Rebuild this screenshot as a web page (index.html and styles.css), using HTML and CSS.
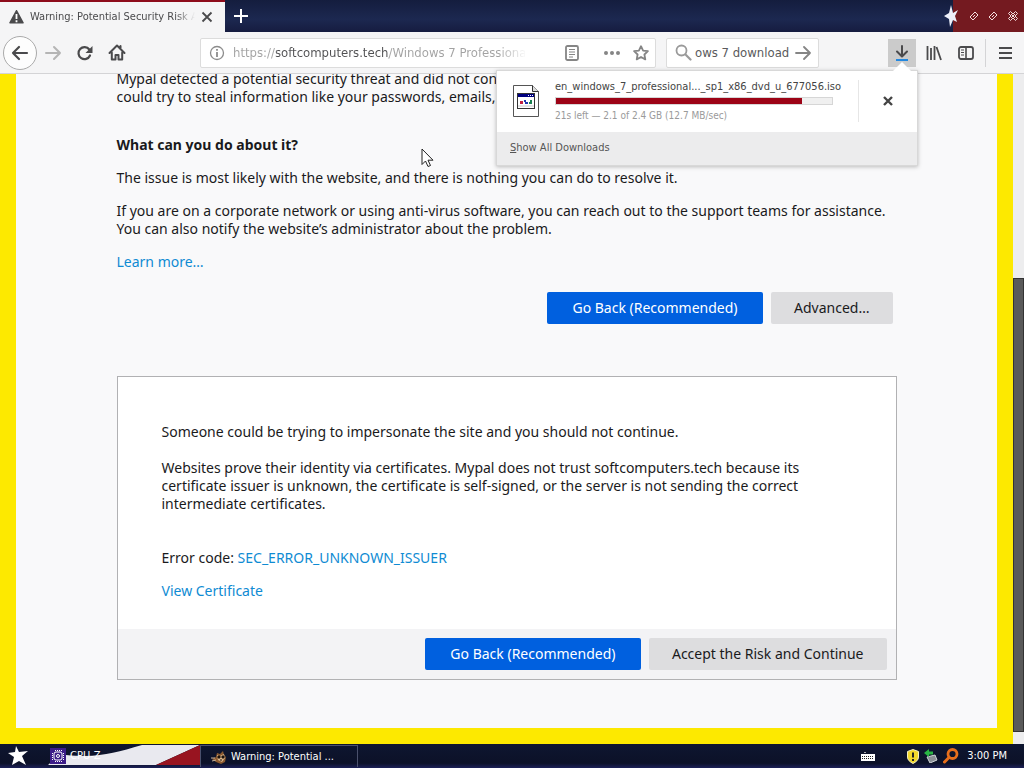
FILE: index.html
```html
<!DOCTYPE html>
<html lang="en">
<head>
  <meta charset="UTF-8" />
  <meta name="viewport" content="width=device-width, initial-scale=1.0"/>
  <title>Warning: Potential Security Risk Ahead</title>
  <link rel="stylesheet" href="styles.css">
</head>
<body>

  <!-- Tabs and window buttons -->
  <div class="titlebar">
    <div class="tab">
      <svg class="tab-icon" width="15" height="14" viewBox="0 0 15 14"><path d="M7.500.8 14 12.800H1z" fill="#4a4a4c" stroke="#4a4a4c" stroke-width="1.600" stroke-linejoin="round"/><path d="M7.500 4v5M7.500 10.300v2" stroke="#fff" stroke-width="1.800"/></svg>
      <span class="tab-title">Warning: Potential Security Risk Ahead</span>
      <button class="tab-close" aria-label="Close tab">
        <svg width="12" height="12" viewBox="0 0 12 12"><path d="M1.500 1.500l9 9M10.500 1.500l-9 9" stroke="#4a4a4c" stroke-width="1.800"/></svg>
      </button>
    </div>
    <button class="new-tab" aria-label="New tab">
      <svg width="14" height="14" viewBox="0 0 14 14"><path d="M7 0v14M0 7h14" stroke="#fff" stroke-width="2"/></svg>
    </button>
    <div class="window-buttons">
      <svg class="window-star" width="15" height="24" viewBox="0 0 15 24"><path d="M7 1l2 8 5-3-3 6 2 6-4-2-3 7-1-8-5-3 5-3z" fill="#eef0fa"/></svg>
      <button aria-label="Minimize"><svg width="10" height="10" viewBox="0 0 10 10"><path d="M1 6l5-5 3 3-5 5zM4 6l2-2" fill="none" stroke="#f3dede"/></svg></button>
      <button aria-label="Restore"><svg width="10" height="10" viewBox="0 0 10 10"><path d="M1 6l5-5 3 3-5 5zM4 6l2-2" fill="none" stroke="#f3dede"/></svg></button>
      <button aria-label="Close"><svg width="10" height="10" viewBox="0 0 10 10"><path d="M.5 2.500l2-2L5 3 7.500.500l2 2L7 5l2.500 2.500-2 2L5 7 2.500 9.500l-2-2L3 5zM3 3l4 4M7 3L3 7" fill="none" stroke="#f3dede"/></svg></button>
    </div>
  </div>

  <!-- Navigation toolbar -->
  <div class="toolbar">
    <div class="nav-buttons">
      <button class="back" aria-label="Back"><svg width="18" height="16" viewBox="0 0 18 16"><path d="M16 8H2M8 2L2 8l6 6" fill="none" stroke="#4a4a4c" stroke-width="2.200" stroke-linecap="round" stroke-linejoin="round"/></svg></button>
      <button aria-label="Forward"><svg width="18" height="16" viewBox="0 0 18 16"><path d="M2 8h14M10 2l6 6-6 6" fill="none" stroke="#b5b5b5" stroke-width="2" stroke-linecap="round" stroke-linejoin="round"/></svg></button>
      <button aria-label="Reload"><svg width="16" height="16" viewBox="0 0 16 16"><path d="M13 10.500A6 6 0 1 1 12.300 4.500" fill="none" stroke="#4a4a4c" stroke-width="2.200" stroke-linecap="round"/><path d="M15.500 1v7h-7z" fill="#4a4a4c"/></svg></button>
      <button aria-label="Home"><svg width="18" height="17" viewBox="0 0 18 17"><path d="M1.500 9L9 1.500 16.500 9M12.500 2v3M3.800 8.500V15.500h3.700V11h3v4.500h3.700V8.500" fill="none" stroke="#4a4a4c" stroke-width="2" stroke-linejoin="round" stroke-linecap="round"/></svg></button>
    </div>

    <div class="field url">
      <svg width="16" height="16" viewBox="0 0 16 16"><circle cx="8" cy="8" r="6.500" fill="none" stroke="#8c8c8c" stroke-width="1.300"/><path d="M8 7v5M8 4v1.800" stroke="#8c8c8c" stroke-width="1.800"/></svg>
      <input type="text" class="url-input" aria-label="Address" value="https://softcomputers.tech/Windows 7 Professional SP1">
      <button class="reader" aria-label="Reader view"><svg width="14" height="16" viewBox="0 0 14 16"><rect x="1" y="1" width="12" height="14" rx="1.500" fill="none" stroke="#858585" stroke-width="1.800"/><path d="M4 4.500h6M4 7h6M4 9.500h6M4 12h4" stroke="#858585" stroke-width="1.200"/></svg></button>
      <button class="more" aria-label="Page actions"><svg width="18" height="6" viewBox="0 0 18 6"><circle cx="3" cy="3" r="2" fill="#858585"/><circle cx="9" cy="3" r="2" fill="#858585"/><circle cx="15" cy="3" r="2" fill="#858585"/></svg></button>
      <button aria-label="Bookmark"><svg width="16" height="16" viewBox="0 0 16 16"><path d="M8 1.200l2.100 4.400 4.800.6-3.500 3.300.9 4.900L8 12l-4.300 2.400.9-4.900L1.100 6.200l4.800-.6z" fill="none" stroke="#858585" stroke-width="1.800" stroke-linejoin="round"/></svg></button>
    </div>

    <div class="field search">
      <svg width="17" height="17" viewBox="0 0 17 17"><circle cx="6.500" cy="6.500" r="5" fill="none" stroke="#9a9a9a" stroke-width="1.800"/><path d="M10.500 10.500l5 5" stroke="#9a9a9a" stroke-width="2.200" stroke-linecap="round"/></svg>
      <input type="text" class="search-input" aria-label="Search" value="ows 7 download">
      <button aria-label="Go"><svg width="17" height="14" viewBox="0 0 17 14"><path d="M1 7h14M9 1l6 6-6 6" fill="none" stroke="#858585" stroke-width="1.800" stroke-linecap="round" stroke-linejoin="round"/></svg></button>
    </div>

    <div class="tools">
      <div class="downloads">
        <button class="downloads-button" aria-label="Downloads"><svg width="16" height="18" viewBox="0 0 16 18"><path d="M8 2v10M3 7.500L8 12.500l5-5" fill="none" stroke="#4a4a4c" stroke-width="2" stroke-linecap="round" stroke-linejoin="round"/><path d="M2 16h12" stroke="#2388e0" stroke-width="2"/></svg></button>
        <div class="panel">
          <div class="download">
            <svg class="file-icon" width="26" height="32" viewBox="0 0 26 32"><path d="M.5.500h19l6 6v25H.5z" fill="#fff" stroke="#555"/><path d="M19.500.500v6h6" fill="#ddd" stroke="#333"/><rect x="4.500" y="8.500" width="17" height="15" fill="#fff" stroke="#333"/><path d="M5 9h16v3H5z" fill="#000080"/><path d="M15 10.500h1M17 10.500h1M19 10.500h1" stroke="#fff"/><path d="M7 16h3v3H7z" fill="#c22040"/><path d="M11 15h2v2h2v2h-3v-2h-1z" fill="#2038b0"/><path d="M17 15h2v4h-3v-2h1z" fill="#188050"/><path d="M5 21h16" stroke="#c8c8c8"/></svg>
            <div class="download-info">
              <div class="file-name">en_windows_7_professional..._sp1_x86_dvd_u_677056.iso</div>
              <div class="progress"><div class="progress-fill" style="width: 89.3%"></div></div>
              <div class="file-status">21s left — 2.1 of 2.4 GB (12.7 MB/sec)</div>
            </div>
            <button class="cancel" aria-label="Cancel download"><svg width="10" height="10" viewBox="0 0 10 10"><path d="M1 1l8 8M9 1L1 9" stroke="#444" stroke-width="2.400"/></svg></button>
          </div>
          <button class="show-all"><u>S</u>how All Downloads</button>
        </div>
      </div>
      <button aria-label="Library"><svg width="16" height="16" viewBox="0 0 16 16"><path d="M1.500 1v14M5 3v12M8.500 1v14M10.500 2l4.500 13" fill="none" stroke="#4a4a4c" stroke-width="1.800"/></svg></button>
      <button aria-label="Sidebar"><svg width="16" height="14" viewBox="0 0 16 14"><rect x="1" y="1" width="14" height="12" rx="2" fill="none" stroke="#4a4a4c" stroke-width="1.800"/><path d="M8 1v12" stroke="#4a4a4c" stroke-width="1.600"/><path d="M3 4h3M3 6.500h3M3 9h3" stroke="#4a4a4c"/></svg></button>
      <button class="menu" aria-label="Menu"><svg width="13" height="12" viewBox="0 0 13 12"><path d="M0 1h13M0 6h13M0 11h13" stroke="#4a4a4c" stroke-width="2"/></svg></button>
    </div>
  </div>

  <!-- Page -->
  <div class="viewport">
    <main class="page">
      <div class="container">
        <p>Mypal detected a potential security threat and did not continue to softcomputers.tech. If you visit this site, attackers could try to steal information like your passwords, emails, or credit card details.</p>
        <h2>What can you do about it?</h2>
        <p>The issue is most likely with the website, and there is nothing you can do to resolve it.</p>
        <p>If you are on a corporate network or using anti-virus software, you can reach out to the support teams for assistance. You can also notify the website’s administrator about the problem.</p>
        <p><a href="#">Learn more…</a></p>
        <div class="buttons">
          <button class="button primary">Go Back (Recommended)</button>
          <button class="button">Advanced…</button>
        </div>

        <section class="advanced">
          <div class="advanced-text">
            <p>Someone could be trying to impersonate the site and you should not continue.</p>
            <p class="explain">Websites prove their identity via certificates. Mypal does not trust softcomputers.tech because its certificate issuer is unknown, the certificate is self-signed, or the server is not sending the correct intermediate certificates.</p>
            <p>Error code: <a href="#">SEC_ERROR_UNKNOWN_ISSUER</a></p>
            <p><a href="#">View Certificate</a></p>
          </div>
          <div class="advanced-buttons">
            <button class="button primary">Go Back (Recommended)</button>
            <button class="button">Accept the Risk and Continue</button>
          </div>
        </section>
      </div>
    </main>
    <div class="scrollbar"><div class="thumb"></div></div>
  </div>

  <!-- Taskbar -->
  <div class="taskbar">
    <button class="start" aria-label="Start"><svg width="22" height="22" viewBox="0 0 22 22"><path d="M9 1l3 6 9-1-6 5 4 9-7-4-7 4 2-8-6-4 7-1z" fill="#fff"/></svg></button>
    <button class="task cpu">
      <svg class="flag" width="152" height="20" viewBox="0 0 152 20" preserveAspectRatio="none"><path d="M0 20C6 14 10 12 18 10c34 3 48-2 76-10h58L108 20z" fill="#e9e9ef"/><path d="M152 0v20h-44z" fill="#981420"/></svg>
      <svg class="chip" width="16" height="16" viewBox="0 0 16 16"><rect width="16" height="16" fill="#3c1c88"/><rect x="4" y="4" width="8" height="8" rx="2" fill="none" stroke="#fff"/><circle cx="8" cy="8" r="1.500" fill="none" stroke="#fff"/><path d="M5 2.500h7M5 13.500h7M2.500 5v7M13.500 5v7" stroke="#fff" stroke-dasharray="1 1"/></svg>
      <span class="task-label">CPU-Z</span>
    </button>
    <button class="task active">
      <svg width="16" height="14" viewBox="0 0 16 14"><path d="M1 9l4-2 1-4 3 1 3-3 1 4 2 2-1 5-4 2-5-2z" fill="#8b5a30"/><path d="M6 5l3 1 4-2 1 4-3 4-4-2z" fill="#dcb68a"/><path d="M7 6h2v2H7zM11 6h2v2h-2zM9 10h2" fill="#1c120c" stroke="#1c120c"/><path d="M0 8h4M1 11l4-1" stroke="#c9b39a"/></svg>
      <span class="task-label">Warning: Potential ...</span>
    </button>
    <div class="tray">
      <svg class="keyboard" width="14" height="9" viewBox="0 0 14 9"><path d="M0 2h14v7H0z" fill="#fff"/><path d="M3 0h2v1H3z" fill="#aaa"/><path d="M1 4.500h12M1 6.500h12" stroke="#222" stroke-dasharray="1 1"/></svg>
      <svg width="12" height="15" viewBox="0 0 12 15"><path d="M6 .5l5.500 2V8c0 3-2.500 5-5.500 6.500C3 13 .5 11 .5 8V2.500z" fill="#f2d72a" stroke="#f5f0c0"/><path d="M6 3.500v5M6 10v2" stroke="#222" stroke-width="2"/></svg>
      <svg width="14" height="14" viewBox="0 0 14 14"><path d="M3 8l8-2 2 5-7 3z" fill="#8b9096" stroke="#d0d4d8"/><path d="M0 4l5-4v2.500h4v3H5V8z" fill="#29b544"/></svg>
      <svg width="16" height="16" viewBox="0 0 16 16"><circle cx="9.500" cy="6" r="4.500" fill="none" stroke="#e86f1c" stroke-width="2.800"/><path d="M6 9.500L1.500 14" stroke="#e86f1c" stroke-width="3" stroke-linecap="round"/></svg>
      <span class="clock">3:00 PM</span>
    </div>
  </div>

  <svg class="cursor" width="13" height="20" viewBox="0 0 13 20"><path d="M1 1v15.500l3.500-3.500L7 18.500l2.500-1L7 12.200h5z" fill="#fff" stroke="#222"/></svg>

</body>
</html>
```
FILE: styles.css
```css
* {
  box-sizing: border-box;
}

body {
  margin: 0;
  height: 100vh;
  display: flex;
  flex-direction: column;
  overflow: hidden;
  background: #f9f9fa;
  color: #1a1a1c;
  font-family: "DejaVu Sans Condensed", "Noto Sans", sans-serif;
  font-size: 14px;
  line-height: 18px;
}

button,
input {
  margin: 0;
  padding: 0;
  border: none;
  background: none;
  color: inherit;
  font: inherit;
}

button {
  display: flex;
  align-items: center;
  justify-content: center;
}

svg {
  display: block;
  flex-shrink: 0;
}

/* title bar */
.titlebar {
  height: 32px;
  display: flex;
  flex-shrink: 0;
  background: linear-gradient(#141d3e, #1c2850 60%, #161c40);
}

.tab {
  width: 225px;
  display: flex;
  align-items: center;
  padding: 0 12px 0 9px;
  border-top: 2px solid #8e0c1c;
  background: #f5f5f6;
  color: #4a4a4c;
  font-size: 11px;
}

.tab-title {
  flex: 1;
  margin: 0 6px;
  overflow: hidden;
  white-space: nowrap;
  -webkit-mask-image: linear-gradient(to right, #000 88%, transparent);
  mask-image: linear-gradient(to right, #000 88%, transparent);
}

.new-tab {
  width: 32px;
}

.window-buttons {
  width: 80px;
  margin-left: auto;
  display: flex;
  align-items: center;
  justify-content: space-between;
  padding-right: 6px;
  background: linear-gradient(to right, transparent 9px, #741a20 9px);
}

/* toolbar */
.toolbar {
  height: 42px;
  display: flex;
  flex-shrink: 0;
  align-items: center;
  border-bottom: 1px solid #d4d4d6;
  background: #f5f5f6;
}

.nav-buttons {
  width: 200px;
  display: flex;
  padding-left: 3px;
}

.nav-buttons button {
  width: 32px;
}

.nav-buttons .back {
  width: 34px;
  height: 34px;
  border: 1px solid #aaa;
  border-radius: 50%;
  background: #fdfdfd;
}

.field {
  height: 30px;
  display: flex;
  align-items: center;
  border: 1px solid #dcdcdc;
  border-radius: 2px;
  background: #fff;
  font-size: 13px;
}

.field input {
  min-width: 0;
  outline: none;
}

.url {
  flex: 1;
  padding: 0 6px 0 8px;
}

/* the domain is darker than the rest of the address */
.url-input {
  flex: 1;
  margin: 0 40px 0 8px;
  color: transparent;
  background: linear-gradient(to right, #a2a2a2 43px, #505052 43px, #505052 156px, #a2a2a2 156px, #a2a2a2 265px, transparent 294px);
  -webkit-background-clip: text;
  background-clip: text;
}

.more {
  margin: 0 12px 0 24px;
}

.search {
  width: 153px;
  margin-left: 10px;
  padding: 0 6px 0 8px;
}

.search-input {
  flex: 1;
  margin: 0 3px;
  color: #5a5a5c;
}

.tools {
  width: 205px;
  height: 28px;
  display: flex;
  justify-content: flex-end;
}

.tools > button {
  width: 32px;
}

.tools .menu {
  width: 39px;
  margin-left: 3px;
  border-left: 1px solid #d4d4d6;
}

.downloads {
  position: relative;
  margin-right: 2px;
}

.downloads-button {
  width: 28px;
  height: 28px;
  background: #cbcbcb;
}

/* downloads panel */
.panel {
  position: absolute;
  top: 31px;
  right: -2px;
  z-index: 2;
  width: 422px;
  border: 1px solid #d8d8d8;
  background: #fff;
  box-shadow: 0 1px 4px rgba(0, 0, 0, 0.25);
}

.panel::before {
  content: "";
  position: absolute;
  top: -9px;
  right: 6px;
  border: 9px solid transparent;
  border-top: none;
  border-bottom-color: #fff;
}

.download {
  height: 61px;
  display: flex;
  align-items: center;
  padding-left: 16px;
  font-size: 11px;
  line-height: 14px;
}

.download-info {
  flex: 1;
  margin-left: 16px;
  color: #444;
  white-space: nowrap;
}

.progress {
  width: 278px;
  height: 8px;
  margin: 3px 0 4px;
  border: 1px solid #d6d6d6;
  background: #f0f0f0;
}

.progress-fill {
  height: 100%;
  background: #9c0316;
}

.file-status {
  color: #9a9a9a;
  font-size: 10px;
}

.cancel {
  width: 59px;
  height: 42px;
  border-left: 1px solid #e6e6e6;
}

.show-all {
  display: block;
  width: 100%;
  height: 33px;
  padding-left: 13px;
  background: #ececed;
  color: #555;
  font-size: 11px;
  text-align: left;
}

/* warning page */
.viewport {
  flex: 1;
  min-height: 0;
  display: flex;
  overflow: hidden;
}

.page {
  flex: 1;
  overflow: hidden;
  border: 16px solid #fde900;
  border-top: none;
  background: #f9f9fa;
  font-family: "Noto Sans", "DejaVu Sans Condensed", sans-serif;
}

/* scrolled a few pixels into the first paragraph */
.container {
  max-width: 780px;
  margin: -4px auto 0;
}

p {
  margin: 0 0 15px;
}

h2 {
  margin: 30px 0 15px;
  font-size: 14px;
  line-height: 18px;
}

a {
  color: #0f8bd3;
  text-decoration: none;
}

.buttons {
  display: flex;
  justify-content: flex-end;
  gap: 8px;
  margin: 21px 4px 52px;
}

.button {
  height: 32px;
  padding: 0 23px;
  border-radius: 2px;
  background: #dddddf;
}

.button.primary {
  min-width: 216px;
  background: #0060df;
  color: #fff;
}

.advanced {
  border: 1px solid #b1b1b3;
  background: #fff;
}

.advanced-text {
  padding: 46px 44px 14px;
}

.advanced-text .explain {
  margin: 18px 0 36px;
}

.advanced-buttons {
  display: flex;
  justify-content: flex-end;
  gap: 8px;
  padding: 9px;
  background: #f3f3f5;
}

.scrollbar {
  width: 11px;
  display: flex;
  flex-direction: column;
  justify-content: flex-end;
  padding-bottom: 12px;
  background: #ededee;
}

.thumb {
  height: 454px;
  border: 1px solid #333;
  background: #5a5a5a;
}

/* taskbar */
.taskbar {
  height: 24px;
  display: flex;
  flex-shrink: 0;
  align-items: center;
  background: linear-gradient(#0e1630, #0c1128 80%, #1c2058);
  color: #fff;
  font-size: 11px;
}

.start {
  width: 36px;
  margin-right: 12px;
}

.task {
  height: 22px;
  justify-content: flex-start;
}

.cpu {
  width: 152px;
  position: relative;
  overflow: hidden;
}

/* the flag runs behind the icon and the lower half of the label */
.flag {
  position: absolute;
  inset: 0;
}

.chip {
  position: relative;
  margin-left: 2px;
}

.task-label {
  position: relative;
  margin-left: 4px;
}

.active {
  width: 158px;
  padding-left: 10px;
  border: 1px solid #4a506c;
  border-bottom: none;
}

.tray {
  margin-left: auto;
  display: flex;
  align-items: center;
  gap: 5px;
  padding-right: 17px;
}

.keyboard {
  margin-right: 27px;
}

.clock {
  margin-left: 3px;
}

.cursor {
  position: absolute;
  left: 421px;
  top: 148px;
}
```
